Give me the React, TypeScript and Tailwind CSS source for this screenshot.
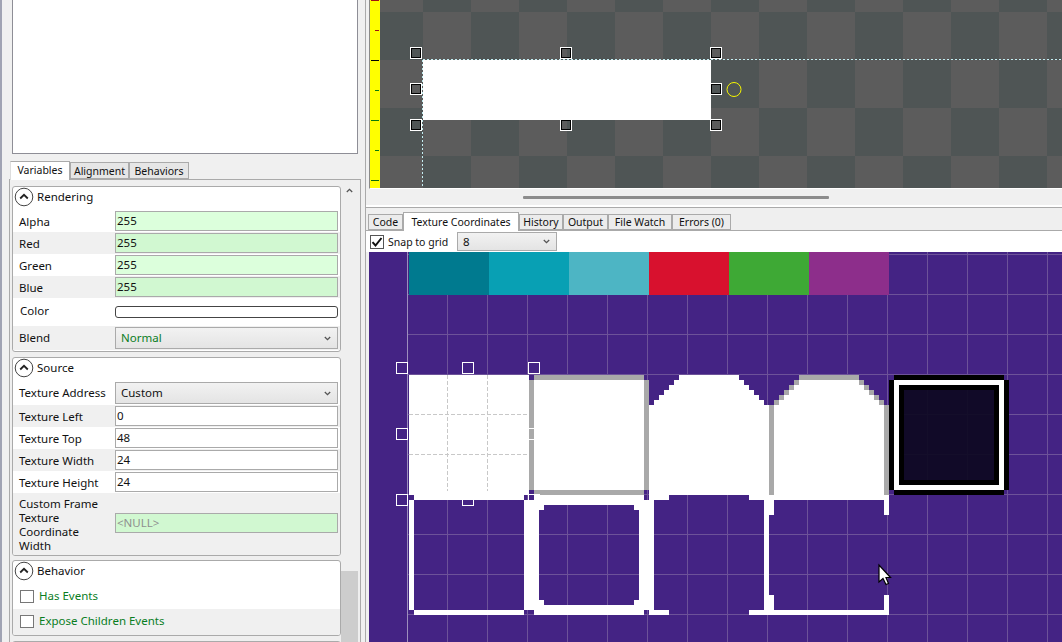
import React from "react";

const Chevron = ({ className = "" }: { className?: string }) => (
  <svg width="7" height="5" viewBox="0 0 7 5" className={className}>
    <path d="M0.8 1L3.5 3.7L6.2 1" fill="none" stroke="#555" strokeWidth="1.3" />
  </svg>
);

const Header = ({ title }: { title: string }) => (
  <div className="flex h-[23px] items-center pb-[3px] pl-[1px]">
    <svg width="20" height="20" viewBox="0 0 20 20" className="shrink-0">
      <circle cx="10" cy="10" r="8.8" fill="white" stroke="#444" strokeWidth="1" />
      <path d="M6.2 11.5L10 7.8L13.8 11.5" fill="none" stroke="#222" strokeWidth="1.8" />
    </svg>
    <span className="ml-[3px] text-[#111]">{title}</span>
  </div>
);

const Input = ({ value, tone = "white", muted = false }: { value: string; tone?: "white" | "a" | "b"; muted?: boolean }) => (
  <div
    className={`ml-auto mr-[2px] flex h-[20px] w-[223px] items-center border border-[#aaa] pl-[1px] ${
      tone === "a" ? "bg-[#dcffdc]" : tone === "b" ? "bg-[#d1f8d1]" : "bg-white"
    } ${muted ? "text-[#8f8f8f]" : "text-[#111]"}`}
  >
    {value}
  </div>
);

const Combo = ({ value, green = false }: { value: string; green?: boolean }) => (
  <div
    className={`ml-auto mr-[2px] flex h-[22px] w-[223px] items-center justify-between border border-[#aaa] bg-linear-to-b from-[#f2f2f2] to-[#e4e4e4] pl-[5px] pr-[6px] ${
      green ? "text-[#0a7d1e]" : "text-[#111]"
    }`}
  >
    <span>{value}</span>
    <Chevron />
  </div>
);

const Row = ({ label, alt = false, children }: { label: string; alt?: boolean; children: React.ReactNode }) => (
  <div className={`flex h-[22px] items-center pl-[6px] ${alt ? "bg-[#f0f0f0]" : "bg-white"}`}>
    <span className="whitespace-nowrap pt-[1px] text-[#111]">{label}</span>
    {children}
  </div>
);

const Check = ({ label, alt = false, tall = false }: { label: string; alt?: boolean; tall?: boolean }) => (
  <div className={`flex items-center pl-[7px] ${tall ? "h-[25px]" : "h-[24px]"} ${alt ? "bg-[#f0f0f0]" : "bg-white"}`}>
    <span className="h-[13px] w-[14px] border border-[#777] bg-white" />
    <span className={`ml-[5px] text-[#0a7d1e] ${tall ? "pb-[2px]" : ""}`}>{label}</span>
  </div>
);

const Group = ({ children, className = "" }: { children: React.ReactNode; className?: string }) => (
  <div className={`w-[329px] shrink-0 overflow-hidden rounded-[3px] border border-[#aaa] bg-white ${className}`}>{children}</div>
);

const SideTab = ({ label, active = false, w }: { label: string; active?: boolean; w: string }) => (
  <div
    className={`flex items-center justify-center border border-[#aaa] text-[10.5px] text-[#111] ${w} ${
      active ? "relative z-10 -mb-px h-[19px] self-end border-b-0 border-l-[#ddd] bg-white pb-[2px]" : "h-[17px] self-end bg-[#e6e6e6]"
    }`}
  >
    {label}
  </div>
);

const white = "M524 500H654V610H524ZM544 505V510H539V600H544V605H634V600H639V510H634V505Z";
const rounded = "M679 375H739V380H744V385H749V390H754V395H759V400H764V405H769V495H649V405H654V400H659V395H664V390H669V385H674V380H679Z";
const rounded2 = "M799 380H859V385H864V390H869V395H874V400H879V405H884V495H774V405H779V400H784V395H789V390H794V385H799Z";

const whiteRects = [
  [409, 375, 120, 120], [414, 495, 110, 5], [409, 500, 5, 110], [414, 610, 110, 5],
  [534, 380, 110, 110], [534, 495, 110, 5], [534, 610, 110, 5],
  [649, 495, 20, 5], [749, 495, 140, 5], [649, 610, 20, 5], [749, 610, 140, 5],
  [764, 500, 5, 110], [769, 500, 5, 15], [769, 595, 5, 15], [884, 500, 5, 15], [884, 595, 5, 15],
];
const grayRects = [
  [534, 375, 110, 5], [529, 380, 5, 110], [644, 380, 5, 110], [534, 490, 110, 5],
  [799, 375, 60, 5], [794, 380, 5, 5], [789, 385, 5, 5], [784, 390, 5, 5], [779, 395, 5, 5], [774, 400, 5, 5],
  [769, 405, 5, 90], [859, 380, 5, 5], [864, 385, 5, 5], [869, 390, 5, 5], [874, 395, 5, 5], [879, 400, 5, 5], [884, 405, 5, 90],
];
const bars: [number, string][] = [
  [409, "#007a8f"], [489, "#08a0b4"], [569, "#4db5c4"], [649, "#d8112e"], [729, "#3ea935"], [809, "#8d2e8b"],
];

const TextureCanvas = () => {
  const vs = Array.from({ length: 17 }, (_, i) => 407 + i * 40);
  const hs = Array.from({ length: 10 }, (_, i) => 254 + i * 40);
  return (
    <svg width="693" height="390" viewBox="369 252 693 390" shapeRendering="crispEdges" className="block">
      <rect x="369" y="252" width="693" height="390" fill="#442384" />
      {hs.map((y) => <rect key={y} x="408" y={y} width="654" height="1" fill="#6d5299" />)}
      {vs.map((x, i) => <rect key={x} x={x} y="252" width="1" height="390" fill={i === 0 ? "#9d8fbd" : "#6d5299"} />)}
      {bars.map(([x, c]) => <rect key={x} x={x} y="252" width="80" height="43" fill={c} />)}
      {grayRects.map((r, i) => <rect key={i} x={r[0]} y={r[1]} width={r[2]} height={r[3]} fill="#a9a9a9" />)}
      {whiteRects.map((r, i) => <rect key={i} x={r[0]} y={r[1]} width={r[2]} height={r[3]} fill="#fff" />)}
      <path d={white} fill="#fff" fillRule="evenodd" />
      <path d={rounded} fill="#fff" />
      <path d={rounded2} fill="#fff" />
      <path d="M894 375H1004V380H1009V490H1004V495H894V490H889V380H894ZM894 380V490H1004V380Z" fill="#000" fillRule="evenodd" />
      <path d="M894 380H1004V490H894ZM899 385V485H999V385Z" fill="#fff" fillRule="evenodd" />
      <path d="M899 385H999V485H899ZM904 390V480H994V390Z" fill="#000" fillRule="evenodd" />
      <rect x="904" y="390" width="90" height="90" fill="#0d0921" fillOpacity="0.93" />
      {[447, 487].map((x) => <path key={x} d={`M${x + 0.5} 375V491`} stroke="#c8c8c8" strokeDasharray="4 2" />)}
      {[414, 454].map((y) => <path key={y} d={`M409 ${y + 0.5}H527`} stroke="#c8c8c8" strokeDasharray="4 2" />)}
      {[[396, 362], [462, 362], [528, 362], [396, 428], [528, 428], [396, 494], [462, 494], [528, 494]].map(([x, y]) => (
        <rect key={`${x}-${y}`} x={x + 0.5} y={y + 0.5} width="11" height="11" fill="none" stroke="#fff" />
      ))}
      <path
        d="M879 565V582L883 578.5L886 584.5L888.5 583.5L886 577.5H890.5Z"
        fill="#fff"
        stroke="#000"
        strokeWidth="1.2"
        shapeRendering="auto"
      />
    </svg>
  );
};

const ticks: [number, number, string][] = [
  [0, 371, "#a01010"], [30, 375, "#a01010"], [60, 371, "#000"], [90, 375, "#0a7a0a"],
  [120, 371, "#0a7a0a"], [150, 375, "#0a7a0a"], [180, 371, "#0a6a0a"],
];

const SceneCanvas = () => {
  const cells: { x: number; y: number; d: boolean }[] = [];
  for (let i = 0; i < 15; i++) for (let j = 0; j < 6; j++) cells.push({ x: 375 + 48 * i, y: -36 + 48 * j, d: (i + j) % 2 === 1 });
  return (
    <svg width="692" height="188" viewBox="370 0 692 188" shapeRendering="crispEdges" className="block">
      {cells.map((c) => <rect key={`${c.x}-${c.y}`} x={c.x} y={c.y} width="48" height="48" fill={c.d ? "#4f5555" : "#5c5c5c"} />)}
      <rect x="370" y="0" width="10" height="188" fill="#ffff00" />
      {ticks.map(([y, x, c]) => <rect key={y} x={x} y={y} width={379 - x} height="1" fill={c} />)}
      <rect x="423" y="60" width="288" height="60" fill="#fff" />
      <path d="M422.5 60V188" stroke="#c4eef2" strokeDasharray="2 2" />
      <path d="M423 59.5H1062" stroke="#c4eef2" strokeDasharray="2 2" />
      {[410, 560, 710].flatMap((x) => [47, 83, 119].filter((y) => !(x === 560 && y === 83)).map((y) => (
        <g key={`${x}-${y}`}>
          <rect x={x + 0.5} y={y + 0.5} width="11" height="11" fill="none" stroke="#fff" />
          <rect x={x + 1.5} y={y + 1.5} width="9" height="9" fill="none" stroke="#000" />
        </g>
      )))}
      <circle cx="734" cy="89.5" r="7" fill="none" stroke="#f6f600" shapeRendering="auto" />
    </svg>
  );
};

const BottomTab = ({ label, w, active = false }: { label: string; w: string; active?: boolean }) => (
  <div
    className={`flex items-center justify-center border border-[#aaa] text-[10.5px] text-[#111] ${w} ${
      active ? "relative z-10 -mb-px h-[19px] border-b-0 bg-white pb-[1px]" : "h-[16px] bg-[#ececec]"
    }`}
  >
    {label}
  </div>
);

export default function App() {
  return (
    <div className="flex h-[642px] w-[1062px] overflow-hidden bg-[#f0f0f0] font-['Noto_Sans',sans-serif] text-[11.5px] leading-[14px]">
      <div className="flex h-[642px] w-[365px] shrink-0 flex-col border-l-2 border-l-[#a0a3b3]">
        <div className="ml-[10px] h-[154px] w-[346px] shrink-0 border-x border-b border-[#8e8e96] bg-white" />
        <div className="ml-[8px] mt-[7px] flex h-[18px] shrink-0 items-end">
          <SideTab label="Variables" active w="w-[60px]" />
          <SideTab label="Alignment" w="w-[59px]" />
          <SideTab label="Behaviors" w="w-[60px]" />
        </div>
        <div className="ml-[7px] flex w-[352px] flex-1 border-l border-r border-t border-[#aaa] bg-[#efefef]">
          <div className="flex w-[331px] shrink-0 flex-col pl-[2px] pt-[6px]">
            <Group>
              <Header title="Rendering" />
              <Row label="Alpha"><Input value="255" tone="a" /></Row>
              <Row label="Red" alt><Input value="255" tone="b" /></Row>
              <Row label="Green"><Input value="255" tone="a" /></Row>
              <Row label="Blue" alt><Input value="255" tone="b" /></Row>
              <div className="flex h-[28px] items-center pl-[7px]">
                <span className="pb-[3px] text-[#111]">Color</span>
                <div className="ml-auto mr-[2px] h-[12px] w-[223px] rounded-[3px] border border-[#444] bg-white" />
              </div>
              <div className="flex h-[24px] items-center bg-[#f0f0f0] pl-[6px]">
                <span className="text-[#111]">Blend</span>
                <Combo value="Normal" green />
              </div>
              <div className="h-[1px]" />
            </Group>
            <Group className="mt-[5px]">
              <Header title="Source" />
              <div className="flex h-[24px] items-center pl-[6px]">
                <span className="text-[#111]">Texture Address</span>
                <Combo value="Custom" />
              </div>
              <Row label="Texture Left" alt><Input value="0" /></Row>
              <Row label="Texture Top"><Input value="48" /></Row>
              <Row label="Texture Width" alt><Input value="24" /></Row>
              <Row label="Texture Height"><Input value="24" /></Row>
              <div className="flex h-[60px] items-center bg-[#f0f0f0] pl-[6px]">
                <span className="w-[90px] pt-[4px] text-[#111]">Custom Frame Texture Coordinate Width</span>
                <Input value="<NULL>" tone="b" muted />
              </div>
              <div className="h-[2px] bg-[#f0f0f0]" />
            </Group>
            <Group className="mt-[4px]">
              <Header title="Behavior" />
              <Check label="Has Events" tall />
              <Check label="Expose Children Events" alt />
              <div className="h-[2px] bg-[#f0f0f0]" />
            </Group>
            <Group className="mt-[5px] h-[20px]">
              <div />
            </Group>
          </div>
          <div className="mt-[1px] flex w-[17px] flex-col">
            <div className="flex h-[16px] items-center justify-center pt-[3px]">
              <Chevron className="rotate-180" />
            </div>
            <div className="mt-auto h-[90px] bg-[#cdcdcd]" />
          </div>
        </div>
      </div>

      <div className="flex h-[642px] flex-1 flex-col border-l border-l-[#aaa]">
        <div className="flex h-[189px] shrink-0 pl-[3px]">
          <div className="h-[189px] w-[693px] border-b border-l border-b-white border-l-[#8a8a8a]">
            <SceneCanvas />
          </div>
        </div>
        <div className="flex h-[16px] shrink-0 items-center pl-[157px]">
          <div className="h-[3px] w-[306px] rounded-[1px] bg-[#8c8c8c]" />
        </div>
        <div className="h-[2px] shrink-0 bg-white" />
        <div className="flex h-[24px] shrink-0 items-end border-y border-[#aaa] bg-[#efefef] pl-[2px]">
          <BottomTab label="Code" w="w-[35px]" />
          <BottomTab label="Texture Coordinates" active w="w-[116px]" />
          <BottomTab label="History" w="w-[44px]" />
          <BottomTab label="Output" w="w-[45px]" />
          <BottomTab label="File Watch" w="w-[64px]" />
          <BottomTab label="Errors (0)" w="w-[59px]" />
        </div>
        <div className="flex h-[21px] shrink-0 items-center bg-white pl-[4px]">
          <span className="flex h-[14px] w-[14px] shrink-0 items-center justify-center border border-[#555] bg-white">
            <svg width="12" height="12" viewBox="0 0 12 12">
              <path d="M1.5 6.2L4.5 9.5L10.5 2" fill="none" stroke="#111" strokeWidth="2" />
            </svg>
          </span>
          <span className="ml-[4px] w-[69px] shrink-0 text-[10.5px] text-[#111]">Snap to grid</span>
          <div className="flex h-[19px] w-[100px] items-center justify-between border border-[#aaa] bg-linear-to-b from-[#f2f2f2] to-[#e4e4e4] pl-[5px] pr-[6px] text-[#111]">
            <span>8</span>
            <Chevron />
          </div>
        </div>
        <div className="pl-[3px]">
          <TextureCanvas />
        </div>
      </div>
    </div>
  );
}
